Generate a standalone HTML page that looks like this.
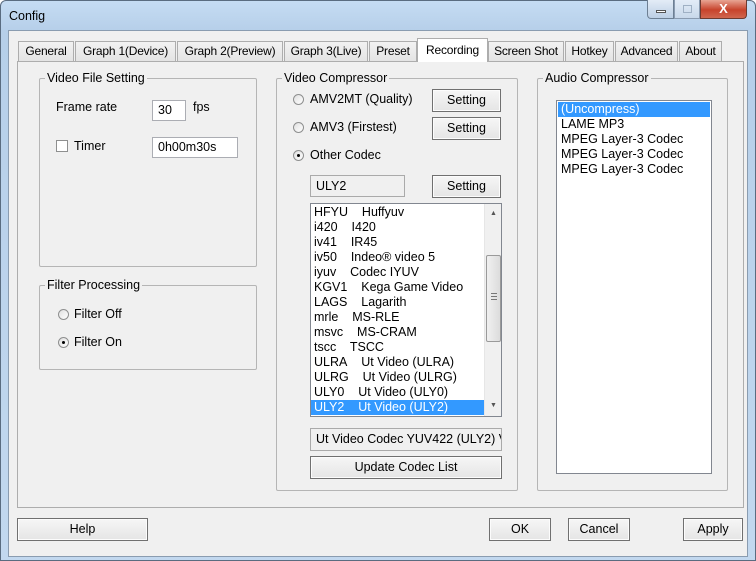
<!DOCTYPE html>
<html><head><meta charset="utf-8"><style>
*{box-sizing:border-box;margin:0;padding:0}
body{width:756px;height:561px;overflow:hidden;font-family:"Liberation Sans",sans-serif;font-size:12px;color:#000;background:#fff;position:relative}
.a{position:absolute}
.frame{left:0;top:0;width:756px;height:561px;border-radius:6px 6px 0 0;background:linear-gradient(#c5dcf3,#b6cfe9 30px,#c2d8ef);border:1px solid #5a6c80}
.client{left:8px;top:30px;width:740px;height:527px;background:#f0f0f0;border:1px solid #8a9cb0}
.tab{top:41px;height:21px;border:1px solid #adadad;border-bottom:none;background:linear-gradient(#f2f2f2,#e3e3e3);text-align:center;line-height:19px;font-size:12px;letter-spacing:-0.2px;white-space:nowrap;overflow:hidden}
.tab.sel{top:38px;height:24px;background:#fff;z-index:2;line-height:22px}
.panel{left:17px;top:61px;width:727px;height:447px;border:1px solid #adadad;background:#f0f0f0;z-index:1}
.grp{border:1px solid #b5b5b5;border-radius:2px;z-index:3}
.gl{background:#f0f0f0;padding:0 2px;z-index:4;font-size:12.5px;line-height:14px}
.btn{border:1px solid #707070;background:linear-gradient(#f6f6f6,#e5e5e5);text-align:center;font-size:12.5px;z-index:4;box-shadow:inset 0 0 0 1px #fcfcfc}
.inp{background:#fff;border:1px solid #abadb3;z-index:4;padding-left:5px;font-size:12.5px}
.radio{width:11px;height:11px;border-radius:50%;border:1px solid #8e8f8f;background:linear-gradient(135deg,#e0e0e0,#fff);z-index:4}
.radio.on::after{content:"";position:absolute;left:3px;top:3px;width:3px;height:3px;border-radius:50%;background:#000}
.t{z-index:4;font-size:12.5px;white-space:nowrap}
.list{background:#fff;border:1px solid #828790;z-index:4;overflow:hidden}
.it{height:15px;line-height:15px;padding-left:3px;white-space:nowrap;font-size:12.5px}
.it.s{background:#3399ff;color:#fff}
</style></head><body>
<div class="a frame"></div>
<div class="a" style="left:9px;top:9px;font-size:12.5px">Config</div>
<div class="a" style="left:647px;top:0;width:27px;height:19px;border:1px solid #6d7f93;border-top:none;border-radius:0 0 0 4px;background:linear-gradient(#e3ecf7,#bccfe5)"><div class="a" style="left:8px;top:10px;width:10px;height:3px;background:#fff;border:1px solid #555"></div></div>
<div class="a" style="left:674px;top:0;width:26px;height:19px;border:1px solid #8a9bb0;border-top:none;background:linear-gradient(#e3ecf7,#c8d8ea)"><div class="a" style="left:8px;top:5px;width:9px;height:8px;border:1px solid #9fb0c4"></div></div>
<div class="a" style="left:700px;top:0;width:47px;height:19px;border:1px solid #6d3a30;border-top:none;border-radius:0 0 4px 0;background:linear-gradient(#e8a593,#c7432c 55%,#d0664e);color:#fff;font-weight:bold;text-align:center;line-height:17px;font-size:13px">X</div>
<div class="a client"></div>
<div class="a tab" style="left:18px;width:56px">General</div>
<div class="a tab" style="left:75px;width:101px">Graph 1(Device)</div>
<div class="a tab" style="left:177px;width:106px">Graph 2(Preview)</div>
<div class="a tab" style="left:284px;width:84px">Graph 3(Live)</div>
<div class="a tab" style="left:369px;width:48px">Preset</div>
<div class="a tab sel" style="left:417px;width:71px">Recording</div>
<div class="a tab" style="left:488px;width:76px">Screen Shot</div>
<div class="a tab" style="left:565px;width:49px">Hotkey</div>
<div class="a tab" style="left:615px;width:63px">Advanced</div>
<div class="a tab" style="left:679px;width:43px">About</div>
<div class="a panel"></div>

<div class="a grp" style="left:39px;top:78px;width:218px;height:189px"></div>
<div class="a gl" style="left:45px;top:71px">Video File Setting</div>
<div class="a t" style="left:56px;top:100px">Frame rate</div>
<div class="a inp" style="left:152px;top:100px;width:34px;height:21px;line-height:19px">30</div>
<div class="a t" style="left:193px;top:100px">fps</div>
<div class="a" style="left:56px;top:140px;width:12px;height:12px;border:1px solid #8e8f8f;background:#fff;z-index:4"></div>
<div class="a t" style="left:74px;top:139px">Timer</div>
<div class="a inp" style="left:152px;top:137px;width:86px;height:21px;line-height:19px">0h00m30s</div>

<div class="a grp" style="left:39px;top:285px;width:218px;height:85px"></div>
<div class="a gl" style="left:45px;top:278px">Filter Processing</div>
<div class="a radio" style="left:58px;top:309px"></div>
<div class="a t" style="left:74px;top:307px">Filter Off</div>
<div class="a radio on" style="left:58px;top:337px"></div>
<div class="a t" style="left:74px;top:335px">Filter On</div>

<div class="a grp" style="left:276px;top:78px;width:242px;height:413px"></div>
<div class="a gl" style="left:282px;top:71px">Video Compressor</div>
<div class="a radio" style="left:293px;top:94px"></div>
<div class="a t" style="left:310px;top:92px">AMV2MT (Quality)</div>
<div class="a btn" style="left:432px;top:89px;width:69px;height:23px;line-height:21px">Setting</div>
<div class="a radio" style="left:293px;top:122px"></div>
<div class="a t" style="left:310px;top:120px">AMV3 (Firstest)</div>
<div class="a btn" style="left:432px;top:117px;width:69px;height:23px;line-height:21px">Setting</div>
<div class="a radio on" style="left:293px;top:150px"></div>
<div class="a t" style="left:310px;top:148px">Other Codec</div>
<div class="a inp" style="left:310px;top:175px;width:95px;height:22px;line-height:20px;background:#f0f0f0;border-color:#aaa">ULY2</div>
<div class="a btn" style="left:432px;top:175px;width:69px;height:23px;line-height:21px">Setting</div>
<div class="a list" style="left:310px;top:203px;width:192px;height:214px">
<div style="padding-top:1px;width:173px">
<div class="it">HFYU&nbsp;&nbsp;&nbsp; Huffyuv</div>
<div class="it">i420&nbsp;&nbsp;&nbsp; I420</div>
<div class="it">iv41&nbsp;&nbsp;&nbsp; IR45</div>
<div class="it">iv50&nbsp;&nbsp;&nbsp; Indeo® video 5</div>
<div class="it">iyuv&nbsp;&nbsp;&nbsp; Codec IYUV</div>
<div class="it">KGV1&nbsp;&nbsp;&nbsp; Kega Game Video</div>
<div class="it">LAGS&nbsp;&nbsp;&nbsp; Lagarith</div>
<div class="it">mrle&nbsp;&nbsp;&nbsp; MS-RLE</div>
<div class="it">msvc&nbsp;&nbsp;&nbsp; MS-CRAM</div>
<div class="it">tscc&nbsp;&nbsp;&nbsp; TSCC</div>
<div class="it">ULRA&nbsp;&nbsp;&nbsp; Ut Video (ULRA)</div>
<div class="it">ULRG&nbsp;&nbsp;&nbsp; Ut Video (ULRG)</div>
<div class="it">ULY0&nbsp;&nbsp;&nbsp; Ut Video (ULY0)</div>
<div class="it s">ULY2&nbsp;&nbsp;&nbsp; Ut Video (ULY2)</div>
</div>
<div class="a" style="left:173px;top:0;width:17px;height:212px;background:#f0f0f0;border-left:1px solid #e6e6e6">
<div class="a" style="left:5px;top:6px;font-size:7px;color:#555">▲</div>
<div class="a" style="left:1px;top:51px;width:15px;height:87px;border:1px solid #9a9a9a;border-radius:2px;background:linear-gradient(90deg,#f0f0f0,#dcdcdc)"><div class="a" style="left:4px;top:37px;width:6px;height:7px;border-top:1px solid #777;border-bottom:1px solid #777"><div style="margin-top:2px;border-top:1px solid #777"></div></div></div>
<div class="a" style="left:5px;top:198px;font-size:7px;color:#555">▼</div>
</div>
</div>
<div class="a inp" style="left:310px;top:428px;width:192px;height:23px;line-height:21px;background:#f0f0f0;border-color:#aaa;overflow:hidden;white-space:nowrap;padding-left:5px">Ut Video Codec YUV422 (ULY2) VCM</div>
<div class="a btn" style="left:310px;top:456px;width:192px;height:23px;line-height:21px">Update Codec List</div>

<div class="a grp" style="left:537px;top:78px;width:191px;height:413px"></div>
<div class="a gl" style="left:543px;top:71px">Audio Compressor</div>
<div class="a list" style="left:556px;top:100px;width:156px;height:374px;padding:1px">
<div class="it s">(Uncompress)</div>
<div class="it">LAME MP3</div>
<div class="it">MPEG Layer-3 Codec</div>
<div class="it">MPEG Layer-3 Codec</div>
<div class="it">MPEG Layer-3 Codec</div>
</div>

<div class="a btn" style="left:17px;top:518px;width:131px;height:23px;line-height:21px">Help</div>
<div class="a btn" style="left:489px;top:518px;width:62px;height:23px;line-height:21px">OK</div>
<div class="a btn" style="left:568px;top:518px;width:62px;height:23px;line-height:21px">Cancel</div>
<div class="a btn" style="left:683px;top:518px;width:60px;height:23px;line-height:21px">Apply</div>
</body></html>
